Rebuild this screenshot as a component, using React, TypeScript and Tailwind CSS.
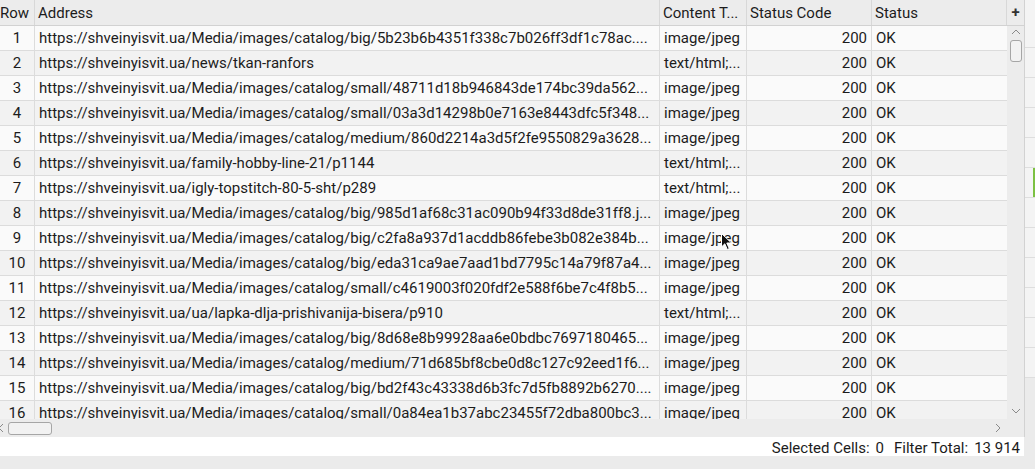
import React from "react";

const BASE = "https://shveinyisvit.ua/";

const rows: [string, string][] = [
  ["Media/images/catalog/big/5b23b6b4351f338c7b026ff3df1c78ac....", "image/jpeg"],
  ["news/tkan-ranfors", "text/html;..."],
  ["Media/images/catalog/small/48711d18b946843de174bc39da562...", "image/jpeg"],
  ["Media/images/catalog/small/03a3d14298b0e7163e8443dfc5f348...", "image/jpeg"],
  ["Media/images/catalog/medium/860d2214a3d5f2fe9550829a3628...", "image/jpeg"],
  ["family-hobby-line-21/p1144", "text/html;..."],
  ["igly-topstitch-80-5-sht/p289", "text/html;..."],
  ["Media/images/catalog/big/985d1af68c31ac090b94f33d8de31ff8.j...", "image/jpeg"],
  ["Media/images/catalog/big/c2fa8a937d1acddb86febe3b082e384b...", "image/jpeg"],
  ["Media/images/catalog/big/eda31ca9ae7aad1bd7795c14a79f87a4...", "image/jpeg"],
  ["Media/images/catalog/small/c4619003f020fdf2e588f6be7c4f8b5...", "image/jpeg"],
  ["ua/lapka-dlja-prishivanija-bisera/p910", "text/html;..."],
  ["Media/images/catalog/big/8d68e8b99928aa6e0bdbc7697180465...", "image/jpeg"],
  ["Media/images/catalog/medium/71d685bf8cbe0d8c127c92eed1f6...", "image/jpeg"],
  ["Media/images/catalog/big/bd2f43c43338d6b3fc7d5fb8892b6270....", "image/jpeg"],
  ["Media/images/catalog/small/0a84ea1b37abc23455f72dba800bc3...", "image/jpeg"],
];

function Chevron({ dir }: { dir: "up" | "down" | "left" | "right" }) {
  const d =
    dir === "up"
      ? "M1 6 L5 2 L9 6"
      : dir === "down"
      ? "M1 2 L5 6 L9 2"
      : dir === "left"
      ? "M6 1 L2 5 L6 9"
      : "M2 1 L6 5 L2 9";
  const w = dir === "up" || dir === "down" ? 10 : 8;
  const h = dir === "up" || dir === "down" ? 8 : 10;
  return (
    <svg width={w} height={h} viewBox={`0 0 ${w} ${h}`} fill="none">
      <path d={d} stroke="#8a8a8a" strokeWidth="1" />
    </svg>
  );
}

export default function App() {
  return (
    <div className="w-[1035px] h-[469px] flex bg-[#ebebeb] font-['Roboto','Liberation_Sans',sans-serif] text-[15px] text-[#1c1c1c] overflow-hidden relative">
      {/* main grid area */}
      <div className="w-[1024px] flex flex-col">
        <div className="h-[419px] flex">
          <div className="w-[1007px] flex flex-col overflow-hidden">
            {/* header */}
            <div className="h-[26px] shrink-0 flex bg-[#ececec] border-b border-[#d2d2d2] leading-[27px] overflow-hidden">
              <div className="w-[35px] border-r border-[#d8d8d8] overflow-hidden whitespace-nowrap">Row</div>
              <div className="w-[625px] border-r border-[#d8d8d8] pl-[3px]">Address</div>
              <div className="w-[87px] border-r border-[#d8d8d8] pl-[3px] whitespace-nowrap overflow-hidden">Content T...</div>
              <div className="w-[125px] border-r border-[#d8d8d8] pl-[3px]">Status Code</div>
              <div className="w-[135px] border-r border-[#d8d8d8] pl-[3px]">Status</div>
            </div>
            {rows.map(([path, type], i) => (
              <div
                key={i}
                className={`h-[25px] shrink-0 flex border-b border-[#dcdcdc] leading-[25px] overflow-hidden ${
                  i % 2 === 0 ? "bg-[#fafafa]" : "bg-[#f2f2f2]"
                }`}
              >
                <div className="w-[35px] border-r border-[#dcdcdc] text-center">{i + 1}</div>
                <div className="w-[625px] border-r border-[#dcdcdc] pl-[4px] whitespace-nowrap overflow-hidden">
                  {BASE + path}
                </div>
                <div className="w-[87px] border-r border-[#dcdcdc] pl-[4px] whitespace-nowrap overflow-hidden">{type}</div>
                <div className="w-[125px] border-r border-[#dcdcdc] pr-[4px] text-right">200</div>
                <div className="w-[135px] pl-[4px]">OK</div>
              </div>
            ))}
          </div>
          {/* vertical scrollbar */}
          <div className="w-[17px] flex flex-col bg-[#ececec]">
            <div className="h-[26px] shrink-0 flex items-center justify-center border-b border-[#d2d2d2] text-[15px] font-bold leading-none text-[#333]">
              +
            </div>
            <div className="h-[10px] flex items-center justify-center mt-[1px]">
              <Chevron dir="up" />
            </div>
            <div className="mx-auto mt-[3px] w-[12px] h-[22px] rounded-[3px] border border-[#a6a6a6] bg-[#f2f2f2]" />
            <div className="flex-1" />
            <div className="h-[10px] flex items-center justify-center mb-[3px]">
              <Chevron dir="down" />
            </div>
          </div>
        </div>
        {/* horizontal scrollbar */}
        <div className="h-[18px] flex items-center bg-[#ececec]">
          <div className="w-[8px] flex items-center -ml-[3px]">
            <Chevron dir="left" />
          </div>
          <div className="ml-[3px] w-[44px] h-[13px] rounded-[3px] border border-[#a6a6a6] bg-[#f2f2f2]" />
          <div className="flex-1" />
          <div className="w-[8px] flex items-center mr-[22px]">
            <Chevron dir="right" />
          </div>
        </div>
        {/* status bar */}
        <div className="h-[19px] bg-white flex items-center justify-end pr-[4px] pt-[3px] leading-none whitespace-nowrap">
          <span>Selected Cells:</span>
          <span className="ml-[6px]">0</span>
          <span className="ml-[10px]">Filter Total:</span>
          <span className="ml-[6px]">13 914</span>
        </div>
        <div className="flex-1 bg-[#ebebeb]" />
      </div>
      <div className="w-px h-[437px] bg-[#d2d2d2]" />
      {/* right strip of neighbouring panel */}
      <div className="w-[10px] flex flex-col bg-[#f4f4f4]">
        <div className="h-[48px] border-b border-[#dedede]" />
        <div className="h-[30px] border-b border-[#dedede]" />
        <div className="h-[30px] border-b border-[#dedede]" />
        <div className="h-[30px] border-b border-[#dedede] " />
        <div className="h-[30px] border-b border-[#dedede] flex justify-end">
          <div className="w-[2px] h-[30px] bg-[#7cc142] mt-[30px]" />
        </div>
        <div className="h-[30px] border-b border-[#dedede]" />
        <div className="h-[30px] border-b border-[#dedede]" />
        <div className="h-[30px] border-b border-[#dedede]" />
        <div className="h-[30px] border-b border-[#dedede]" />
        <div className="h-[30px] border-b border-[#dedede]" />
        <div className="h-[30px] border-b border-[#dedede]" />
        <div className="h-[30px] border-b border-[#dedede]" />
        <div className="flex-1 bg-[#ebebeb]" />
      </div>
      {/* mouse cursor */}
      <svg className="absolute left-[721px] top-[233px]" width="12" height="18" viewBox="0 0 12 18">
        <path d="M0.5 0.5 L0.5 14 L3.8 10.8 L6.3 16.5 L8.3 15.6 L5.8 10 L10.5 10 Z" fill="#111" stroke="#fff" strokeWidth="1" />
      </svg>
    </div>
  );
}
